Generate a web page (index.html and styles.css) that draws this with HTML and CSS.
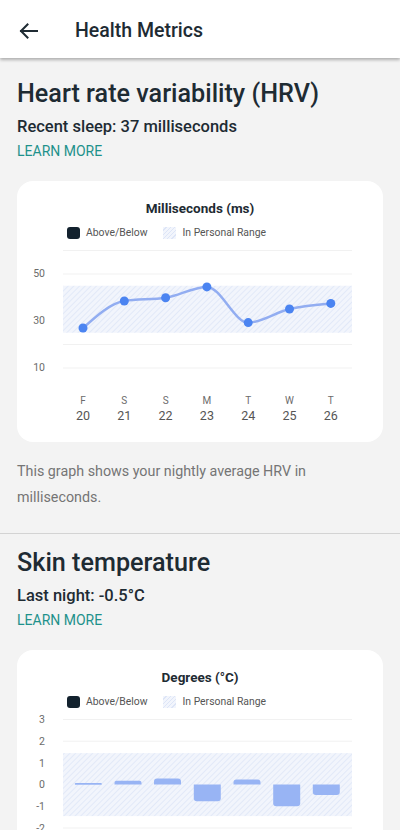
FILE: index.html
```html
<!DOCTYPE html>
<html>
<head>
    <title>Health Metrics</title>
    <link rel="stylesheet" href="styles.css">
</head>
<body>
    <header class="topbar">
        <svg class="back" width="24" height="24" viewBox="0 0 24 24">
            <path d="M20 12H4M10.5 5.5L4 12l6.5 6.5" fill="none" stroke="#1f2b33" stroke-width="2" stroke-linecap="square"/>
        </svg>
        <h1>Health Metrics</h1>
    </header>

    <section class="metric first">
        <h2>Heart rate variability (HRV)</h2>
        <p class="summary">Recent sleep: 37 milliseconds</p>
        <a class="learn" href="#">LEARN MORE</a>

        <div class="card">
            <div class="chart-title">Milliseconds (ms)</div>
            <div class="legend">
                <span class="swatch dark"></span><span>Above/Below</span>
                <span class="swatch hatch"></span><span>In Personal Range</span>
            </div>
            <svg class="plot" width="366" height="196" viewBox="0 0 366 196">
                <defs>
                    <pattern id="hatch1" width="4" height="4" patternUnits="userSpaceOnUse" patternTransform="rotate(45)">
                        <rect width="4" height="4" fill="#f2f5fc"/>
                        <line x1="0" y1="0" x2="0" y2="4" stroke="#dde5f7" stroke-width="1.5"/>
                    </pattern>
                </defs>
                <g stroke="#f1f1f1" stroke-width="1">
                    <line x1="46" x2="335" y1="4.5" y2="4.5"/>
                    <line x1="46" x2="335" y1="28" y2="28"/>
                    <line x1="46" x2="335" y1="51.5" y2="51.5"/>
                    <line x1="46" x2="335" y1="75" y2="75"/>
                    <line x1="46" x2="335" y1="98.5" y2="98.5"/>
                    <line x1="46" x2="335" y1="122" y2="122"/>
                </g>
                <rect x="46" y="39.75" width="289" height="47" fill="url(#hatch1)"/>
                <g class="ylab">
                    <text x="28" y="27" dy=".35em">50</text>
                    <text x="28" y="74" dy=".35em">30</text>
                    <text x="28" y="121" dy=".35em">10</text>
                </g>
                <path d="M66 82.05C79.77 69.63 93.53 57.2 107.3 55C121.07 52.8 134.83 53.9 148.6 51.7C162.37 49.5 176.13 40.9 189.9 40.9C203.67 40.9 217.43 76.6 231.2 76.6C244.97 76.6 258.73 66.19 272.5 63C286.27 59.81 300.03 58.6 313.8 57.4"
                      fill="none" stroke="#92adf1" stroke-width="2.5" stroke-linecap="round"/>
                <g fill="#4b84f1">
                    <circle cx="66" cy="82.05" r="4.5"/>
                    <circle cx="107.3" cy="55" r="4.5"/>
                    <circle cx="148.6" cy="51.7" r="4.5"/>
                    <circle cx="189.9" cy="40.9" r="4.5"/>
                    <circle cx="231.2" cy="76.6" r="4.5"/>
                    <circle cx="272.5" cy="63" r="4.5"/>
                    <circle cx="313.8" cy="57.4" r="4.5"/>
                </g>
                <g class="xday">
                    <text x="66" y="154" dy=".35em">F</text>
                    <text x="107.3" y="154" dy=".35em">S</text>
                    <text x="148.6" y="154" dy=".35em">S</text>
                    <text x="189.9" y="154" dy=".35em">M</text>
                    <text x="231.2" y="154" dy=".35em">T</text>
                    <text x="272.5" y="154" dy=".35em">W</text>
                    <text x="313.8" y="154" dy=".35em">T</text>
                </g>
                <g class="xdate">
                    <text x="66" y="170" dy=".35em">20</text>
                    <text x="107.3" y="170" dy=".35em">21</text>
                    <text x="148.6" y="170" dy=".35em">22</text>
                    <text x="189.9" y="170" dy=".35em">23</text>
                    <text x="231.2" y="170" dy=".35em">24</text>
                    <text x="272.5" y="170" dy=".35em">25</text>
                    <text x="313.8" y="170" dy=".35em">26</text>
                </g>
            </svg>
        </div>

        <p class="note">This graph shows your nightly average HRV in milliseconds.</p>
    </section>

    <section class="metric">
        <h2>Skin temperature</h2>
        <p class="summary">Last night: -0.5°C</p>
        <a class="learn" href="#">LEARN MORE</a>

        <div class="card">
            <div class="chart-title">Degrees (°C)</div>
            <div class="legend">
                <span class="swatch dark"></span><span>Above/Below</span>
                <span class="swatch hatch"></span><span>In Personal Range</span>
            </div>
            <svg class="plot" width="366" height="196" viewBox="0 0 366 196">
                <defs>
                    <pattern id="hatch2" width="4" height="4" patternUnits="userSpaceOnUse" patternTransform="rotate(45)">
                        <rect width="4" height="4" fill="#f2f5fc"/>
                        <line x1="0" y1="0" x2="0" y2="4" stroke="#dde5f7" stroke-width="1.5"/>
                    </pattern>
                </defs>
                <g stroke="#f1f1f1" stroke-width="1">
                    <line x1="46" x2="335" y1="4.5" y2="4.5"/>
                    <line x1="46" x2="335" y1="26.2" y2="26.2"/>
                    <line x1="46" x2="335" y1="47.9" y2="47.9"/>
                    <line x1="46" x2="335" y1="69.6" y2="69.6"/>
                    <line x1="46" x2="335" y1="91.3" y2="91.3"/>
                    <line x1="46" x2="335" y1="113" y2="113"/>
                    <line x1="46" x2="335" y1="134.7" y2="134.7"/>
                </g>
                <rect x="46" y="38.1" width="289" height="63" fill="url(#hatch2)"/>
                <g class="ylab">
                    <text x="28" y="4.5" dy=".35em">3</text>
                    <text x="28" y="26.2" dy=".35em">2</text>
                    <text x="28" y="47.9" dy=".35em">1</text>
                    <text x="28" y="69.6" dy=".35em">0</text>
                    <text x="28" y="91.3" dy=".35em">-1</text>
                    <text x="28" y="113" dy=".35em">-2</text>
                    <text x="28" y="134.7" dy=".35em">-3</text>
                </g>
                <g fill="#98b4f4" transform="translate(0 -1.4)">
                    <rect x="57.8" y="69.3" width="27" height="1.9" rx="0.9"/>
                    <path d="M97.5 71V69.1Q97.5 67.1 99.5 67.1H122.5Q124.5 67.1 124.5 69.1V71Z"/>
                    <path d="M137 71V67.9Q137 64.9 140 64.9H161Q164 64.9 164 67.9V71Z"/>
                    <path d="M176.8 71V84.7Q176.8 87.7 179.8 87.7H200.8Q203.8 87.7 203.8 84.7V71Z"/>
                    <path d="M216.5 71V69Q216.5 66 219.5 66H240.5Q243.5 66 243.5 69V71Z"/>
                    <path d="M256.2 71V89.7Q256.2 92.7 259.2 92.7H280.2Q283.2 92.7 283.2 89.7V71Z"/>
                    <path d="M295.8 71V78.4Q295.8 81.4 298.8 81.4H319.8Q322.8 81.4 322.8 78.4V71Z"/>
                </g>
                <g class="xday">
                    <text x="71.3" y="154" dy=".35em">F</text>
                    <text x="111" y="154" dy=".35em">S</text>
                    <text x="150.5" y="154" dy=".35em">S</text>
                    <text x="190.3" y="154" dy=".35em">M</text>
                    <text x="230" y="154" dy=".35em">T</text>
                    <text x="269.7" y="154" dy=".35em">W</text>
                    <text x="309.3" y="154" dy=".35em">T</text>
                </g>
                <g class="xdate">
                    <text x="71.3" y="170" dy=".35em">20</text>
                    <text x="111" y="170" dy=".35em">21</text>
                    <text x="150.5" y="170" dy=".35em">22</text>
                    <text x="190.3" y="170" dy=".35em">23</text>
                    <text x="230" y="170" dy=".35em">24</text>
                    <text x="269.7" y="170" dy=".35em">25</text>
                    <text x="309.3" y="170" dy=".35em">26</text>
                </g>
            </svg>
        </div>

        <p class="note">This graph shows your nightly skin temperature variation in degrees.</p>
    </section>
</body>
</html>
```

FILE: styles.css
```css
body { margin: 0; background: #f3f3f3; font-family: Roboto, "Liberation Sans", sans-serif; color: #1e2b33; }

.topbar { position: relative; z-index: 1; height: 58px; box-sizing: border-box; padding: 3px 0 0 17px; display: flex; align-items: center; gap: 34px; background: #fff; box-shadow: 0 2px 3px rgba(0, 0, 0, 0.28); }
.topbar h1 { margin: 0; font-size: 19.5px; line-height: 24px; font-weight: 500; }
.back { display: block; }

.metric { padding: 14px 17px 23px; border-top: 1px solid #d3d3d3; }
.metric.first { padding-top: 21px; border-top: none; }
.metric h2 { margin: 0; font-size: 25.2px; line-height: 30px; font-weight: 500; }
.summary { margin: 8px 0 0; font-size: 16.5px; line-height: 20px; font-weight: 500; }
.learn { display: block; margin-top: 4px; font-size: 14px; line-height: 20px; color: #1e918b; text-decoration: none; }

.card { margin-top: 20px; background: #fff; border-radius: 16px; padding-top: 18px; display: flex; flex-direction: column; }
.chart-title { text-align: center; font-size: 13.5px; line-height: 18px; font-weight: 700; }
.legend { margin-top: 10px; padding-left: 50px; height: 12px; display: flex; align-items: center; font-size: 10.4px; line-height: 12px; color: #555; }
.swatch { width: 13px; height: 12px; border-radius: 3px; margin-right: 6px; }
.swatch.dark { background: #13222e; }
.swatch.hatch { margin-left: 16px; border-radius: 0; background: repeating-linear-gradient(135deg, #f2f5fc 0 2px, #dde5f7 2px 3px); }
.plot { display: block; margin-top: 7px; overflow: visible; }
.ylab text { font-size: 10.5px; fill: #6b6b6b; text-anchor: end; }
.xday text { font-size: 10px; fill: #6b6b6b; text-anchor: middle; }
.xdate text { font-size: 12.5px; fill: #555; text-anchor: middle; }

.note { margin: 16px 0 0; font-size: 14.3px; line-height: 26px; color: #757575; }
```
